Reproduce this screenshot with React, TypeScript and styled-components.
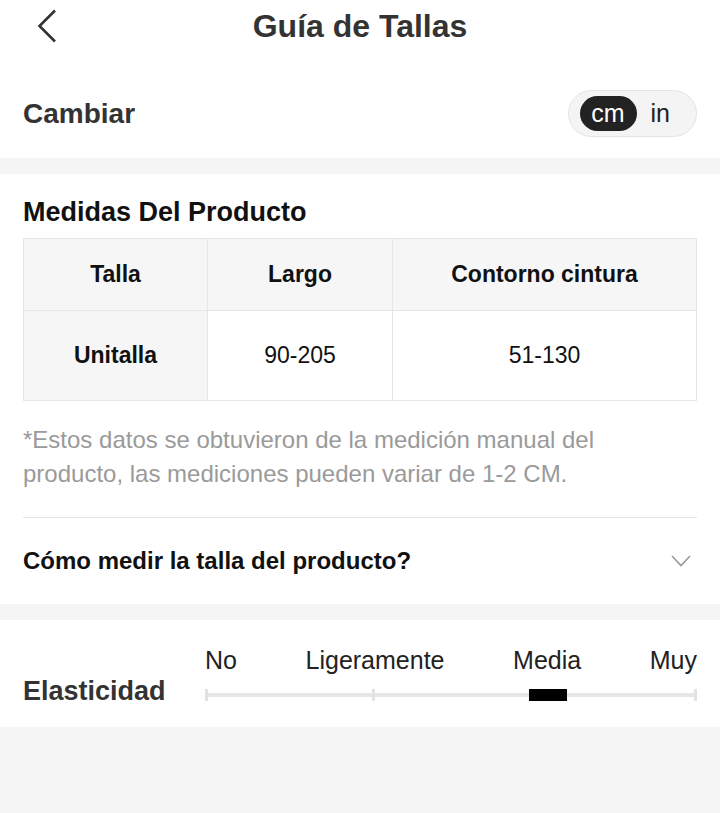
import React, { useState } from "react";
import styled, { createGlobalStyle } from "styled-components";

const GlobalStyle = createGlobalStyle`
  html, body {
    margin: 0;
    padding: 0;
    background: #f5f5f5;
    font-family: "Liberation Sans", Arial, sans-serif;
  }
  * { box-sizing: border-box; }
`;

const Page = styled.div`
  width: 720px;
  min-height: 813px;
  background: #f5f5f5;
`;

const Header = styled.header`
  display: grid;
  grid-template-columns: 1fr auto 1fr;
  align-items: center;
  height: 52px;
  background: #fff;
`;

const BackButton = styled.button`
  justify-self: start;
  margin-left: 36px;
  padding: 0;
  border: 0;
  background: none;
  display: flex;
  align-items: center;
  cursor: pointer;
`;

const Title = styled.h1`
  margin: 0;
  font-size: 32px;
  line-height: 52px;
  font-weight: 700;
  color: #333;
`;

const Section = styled.section<{ $gap?: boolean }>`
  background: #fff;
  margin-top: ${(p) => (p.$gap ? "16px" : "0")};
  padding: 0 23px;
`;

const UnitRow = styled.div`
  display: flex;
  align-items: center;
  justify-content: space-between;
  padding: 38px 0 21px;
`;

const RowLabel = styled.span`
  font-size: 28px;
  font-weight: 700;
  color: #333;
`;

const Toggle = styled.div`
  display: flex;
  align-items: center;
  height: 47px;
  padding: 0 26px 0 11px;
  border: 1px solid #e4e4e4;
  border-radius: 24px;
  background: #f4f4f4;
`;

const ToggleOption = styled.span<{ $active?: boolean }>`
  display: flex;
  align-items: center;
  justify-content: center;
  height: 35px;
  min-width: ${(p) => (p.$active ? "57px" : "0")};
  margin-left: ${(p) => (p.$active ? "0" : "14px")};
  border-radius: 18px;
  background: ${(p) => (p.$active ? "#222" : "transparent")};
  color: ${(p) => (p.$active ? "#fff" : "#222")};
  font-size: 25px;
  cursor: pointer;
`;

const SectionTitle = styled.h2`
  margin: 0;
  padding-top: 20px;
  font-size: 27px;
  line-height: 36px;
  font-weight: 700;
  color: #111;
`;

const Table = styled.div`
  display: grid;
  grid-template-columns: 183px 184px 1fr;
  gap: 1px;
  padding: 1px;
  margin-top: 8px;
  background: #e6e6e6;
`;

const Cell = styled.div<{ $head?: boolean; $shaded?: boolean; $bold?: boolean }>`
  display: flex;
  align-items: center;
  justify-content: center;
  height: ${(p) => (p.$head ? "71px" : "89px")};
  background: ${(p) => (p.$shaded ? "#f6f6f6" : "#fff")};
  font-size: 23px;
  font-weight: ${(p) => (p.$bold ? 700 : 400)};
  color: #111;
`;

const Note = styled.p`
  margin: 22px 0 0;
  font-size: 24px;
  line-height: 34px;
  color: #9a9a9a;
`;

const Divider = styled.hr`
  margin: 26px 0 0;
  border: 0;
  height: 1px;
  background: #e3e3e3;
`;

const Accordion = styled.div`
  display: flex;
  align-items: center;
  justify-content: space-between;
  height: 86px;
  cursor: pointer;
`;

const AccordionTitle = styled.span`
  font-size: 24px;
  font-weight: 700;
  color: #111;
`;

const Chevron = styled.svg<{ $open: boolean }>`
  margin-right: 6px;
  transform: rotate(${(p) => (p.$open ? "180deg" : "0deg")});
`;

const ElasticSection = styled(Section)`
  display: flex;
  align-items: flex-end;
  padding-top: 25px;
  padding-bottom: 26px;
`;

const ElasticLabel = styled.span`
  width: 182px;
  font-size: 27px;
  line-height: 20px;
  font-weight: 700;
  color: #333;
`;

const Scale = styled.div`
  flex: 1;
  display: flex;
  flex-direction: column;
`;

const ScaleLabels = styled.div`
  display: flex;
  justify-content: space-between;
  font-size: 25px;
  line-height: 30px;
  color: #222;
`;

const Track = styled.div`
  position: relative;
  height: 12px;
  margin-top: 14px;
`;

const TrackLine = styled.div`
  position: absolute;
  left: 0;
  right: 0;
  top: 4px;
  height: 4px;
  background: #e6e6e6;
`;

const Tick = styled.div<{ $left: string }>`
  position: absolute;
  top: 0;
  left: ${(p) => p.$left};
  width: 3px;
  height: 12px;
  background: #e2e2e2;
`;

const Marker = styled.div<{ $left: string }>`
  position: absolute;
  top: 0;
  left: ${(p) => p.$left};
  width: 38px;
  height: 12px;
  background: #000;
`;

const levels = ["No", "Ligeramente", "Media", "Muy"];

const App = () => {
  const [unit, setUnit] = useState<"cm" | "in">("cm");
  const [open, setOpen] = useState(false);

  return (
    <Page>
      <GlobalStyle />
      <Header>
        <BackButton aria-label="Volver">
          <svg width="22" height="34" viewBox="0 0 22 34">
            <polyline points="19,1.5 3.5,17 19,32.5" fill="none" stroke="#333" strokeWidth="2.6" />
          </svg>
        </BackButton>
        <Title>Guía de Tallas</Title>
        <span />
      </Header>

      <Section>
        <UnitRow>
          <RowLabel>Cambiar</RowLabel>
          <Toggle>
            <ToggleOption $active={unit === "cm"} onClick={() => setUnit("cm")}>cm</ToggleOption>
            <ToggleOption $active={unit === "in"} onClick={() => setUnit("in")}>in</ToggleOption>
          </Toggle>
        </UnitRow>
      </Section>

      <Section $gap>
        <SectionTitle>Medidas Del Producto</SectionTitle>
        <Table>
          <Cell $head $shaded $bold>Talla</Cell>
          <Cell $head $shaded $bold>Largo</Cell>
          <Cell $head $shaded $bold>Contorno cintura</Cell>
          <Cell $shaded $bold>Unitalla</Cell>
          <Cell>90-205</Cell>
          <Cell>51-130</Cell>
        </Table>
        <Note>
          *Estos datos se obtuvieron de la medición manual del producto, las mediciones pueden variar de 1-2 CM.
        </Note>
        <Divider />
        <Accordion onClick={() => setOpen(!open)}>
          <AccordionTitle>Cómo medir la talla del producto?</AccordionTitle>
          <Chevron $open={open} width="20" height="12" viewBox="0 0 20 12">
            <polyline points="1,1 10,10.5 19,1" fill="none" stroke="#999" strokeWidth="1.6" />
          </Chevron>
        </Accordion>
      </Section>

      <ElasticSection $gap>
        <ElasticLabel>Elasticidad</ElasticLabel>
        <Scale>
          <ScaleLabels>
            {levels.map((l) => (
              <span key={l}>{l}</span>
            ))}
          </ScaleLabels>
          <Track>
            <TrackLine />
            <Tick $left="0px" />
            <Tick $left="167px" />
            <Tick $left="calc(100% - 3px)" />
            <Marker $left="324px" />
          </Track>
        </Scale>
      </ElasticSection>
    </Page>
  );
};

export default App;
